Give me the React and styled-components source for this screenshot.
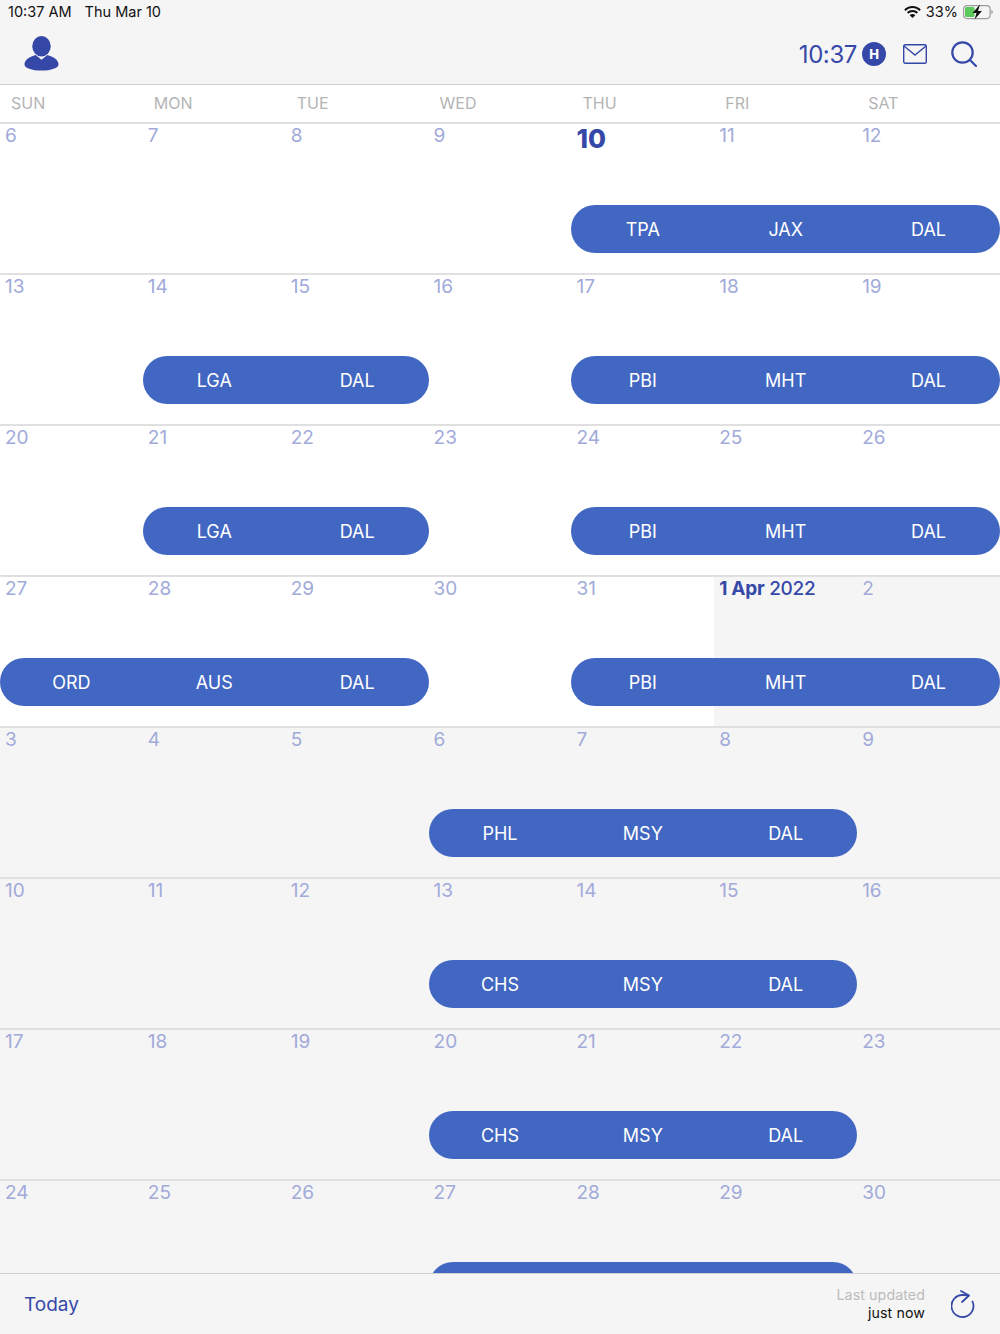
import React from "react";
import styled, { createGlobalStyle } from "styled-components";

const Global = createGlobalStyle`
  html, body { margin: 0; padding: 0; background: #f5f5f5; }
  * { box-sizing: border-box; }
`;

const INK = "#3548a8";

const Page = styled.div`
  width: 1000px;
  height: 1334px;
  display: flex;
  flex-direction: column;
  overflow: hidden;
  background: #f5f5f5;
  font-family: Inter, "Liberation Sans", sans-serif;
`;
const Header = styled.header`
  height: 85px;
  flex: none;
  border-bottom: 1px solid #cfcfcf;
  display: flex;
  flex-direction: column;
`;
const StatusBar = styled.div`
  height: 23px;
  padding: 0 7px 0 8px;
  display: flex;
  align-items: center;
  justify-content: space-between;
  font-size: 14.5px;
  color: #111;
`;
const StatusGroup = styled.div`
  display: flex;
  align-items: center;
  gap: ${(p) => p.$gap}px;
`;
const Toolbar = styled.div`
  flex: 1;
  display: flex;
  align-items: center;
  justify-content: space-between;
  padding: 0 23px 0 24px;
`;
const ToolGroup = styled.div`
  display: flex;
  align-items: center;
`;
const Clock = styled.span`
  font-size: 24px;
  letter-spacing: -0.4px;
  color: ${INK};
  margin-right: 5px;
  padding-top: 2px;
`;
const Badge = styled.span`
  width: 24px;
  height: 24px;
  border-radius: 50%;
  background: ${INK};
  color: #fff;
  font-size: 13px;
  font-weight: 800;
  display: flex;
  align-items: center;
  justify-content: center;
  margin-right: 17px;
`;
const WeekHead = styled.div`
  height: 39px;
  flex: none;
  display: grid;
  grid-template-columns: repeat(7, 1fr);
  align-items: center;
  padding-bottom: 1px;
  background: #fff;
  border-bottom: 2px solid #e0e0e0;
`;
const WeekName = styled.span`
  padding-left: 11px;
  font-size: 16px;
  color: #b4b4b4;
`;
const Calendar = styled.main`
  flex: 1;
  min-height: 0;
  overflow: hidden;
`;
const Week = styled.section`
  height: 151px;
  display: grid;
  grid-template-columns: repeat(7, 1fr);
  grid-template-rows: 81px 48px 1fr;
  border-bottom: 2px solid #e0e0e0;
`;
const Day = styled.div`
  grid-row: 1 / -1;
  grid-column: ${(p) => p.$col};
  background: ${(p) => (p.$past ? "#fff" : "#f5f5f5")};
  padding-left: 5px;
  font-size: 19px;
  line-height: 24px;
  color: #a1aad9;
  white-space: nowrap;
`;
const Today = styled.span`
  display: block;
  font-size: 26px;
  font-weight: 800;
  line-height: 30px;
  color: ${INK};
`;
const MonthLabel = styled.span`
  font-weight: 500;
  letter-spacing: -0.3px;
  color: ${INK};
`;
const MonthStrong = styled.b`
  font-weight: 700;
`;
const Pill = styled.div`
  grid-row: 2;
  grid-column: ${(p) => p.$start} / span ${(p) => p.$span};
  z-index: 1;
  display: grid;
  grid-template-columns: repeat(${(p) => p.$span}, 1fr);
  align-items: center;
  border-radius: 24px;
  background: #4267c2;
  color: #fff;
  font-size: 18px;
  text-align: center;
`;
const Footer = styled.footer`
  height: 61px;
  flex: none;
  border-top: 1px solid #cfcfcf;
  display: flex;
  align-items: center;
  justify-content: space-between;
  padding: 0 25px 0 24px;
  background: #f5f5f5;
`;
const TodayLink = styled.span`
  font-size: 19px;
  color: ${INK};
`;
const Updated = styled.div`
  display: flex;
  flex-direction: column;
  align-items: flex-end;
  font-size: 14.2px;
  line-height: 18px;
  letter-spacing: 0.1px;
  margin-right: 26px;
  color: #111;
`;
const UpdatedLabel = styled.span`
  color: #bcbcbc;
`;

const UserIcon = () => (
  <svg width="35" height="35" viewBox="0 0 36 36">
    <ellipse cx="18" cy="10.5" rx="9.5" ry="10.5" fill={INK} />
    <path d="M12 19.5 L18 24.5 L24 19.5 C30 21 35.5 24.5 35.5 29 C35.5 33 28 35.5 18 35.5 C8 35.5 .5 33 .5 29 C.5 24.5 6 21 12 19.5 Z" fill={INK} />
  </svg>
);
const MailIcon = () => (
  <svg width="24" height="20" viewBox="0 0 24 20" fill="none" stroke={INK} strokeWidth="1.4" style={{ marginRight: 24 }}>
    <rect x="0.7" y="0.7" width="22.6" height="18.6" rx="1.5" />
    <path d="M1 2 L12 11 L23 2" />
  </svg>
);
const SearchIcon = () => (
  <svg width="26" height="26" viewBox="0 0 26 26" fill="none" stroke={INK} strokeWidth="2.2" strokeLinecap="round">
    <circle cx="11.5" cy="11.5" r="10.2" />
    <path d="M19 19 L25 25" />
  </svg>
);
const WifiIcon = () => (
  <svg width="17" height="12" viewBox="0 0 17 12" fill="#111">
    <path d="M8.5 0C5.2 0 2.3 1.3.2 3.4L1.6 4.9C3.4 3.1 5.8 2 8.5 2s5.1 1.1 6.9 2.9l1.4-1.5C14.7 1.3 11.8 0 8.5 0z" />
    <path d="M8.5 4C6.3 4 4.4 4.9 3 6.3l1.4 1.5C5.5 6.7 6.9 6 8.5 6s3 .7 4.1 1.8L14 6.3C12.6 4.9 10.7 4 8.5 4z" />
    <path d="M8.5 8C7.4 8 6.4 8.4 5.7 9.2L8.5 12l2.8-2.8C10.6 8.4 9.6 8 8.5 8z" />
  </svg>
);
const BatteryIcon = () => (
  <svg width="30" height="16" viewBox="0 0 30 16">
    <rect x="0.6" y="1.6" width="26.5" height="13" rx="3.5" fill="none" stroke="#9c9c9c" strokeWidth="1.2" />
    <rect x="2" y="3" width="9.5" height="10" rx="1.5" fill="#5ac85a" />
    <path d="M28.3 6v4c.9-.3 1.5-1.100 1.5-2s-.6-1.700-1.500-2z" fill="#9c9c9c" />
    <path d="M17 .5 L9.5 9 H13.5 L11.5 15.5 L19 7 H15 Z" fill="#111" />
  </svg>
);
const RefreshIcon = () => (
  <svg width="24" height="29" viewBox="0 0 24 29" fill="none" stroke={INK} strokeWidth="1.8" strokeLinecap="round" strokeLinejoin="round">
    <path d="M17.5 5.5 C15.5 5 13.5 5 11.5 5 A11 11 0 1 0 21.5 11.5" />
    <path d="M10 1 L18 5.5 L11 12" />
  </svg>
);

const names = ["SUN", "MON", "TUE", "WED", "THU", "FRI", "SAT"];

const weeks = [
  { days: [6, 7, 8, 9, "today", 11, 12], pills: [{ start: 5, span: 3, stops: ["TPA", "JAX", "DAL"] }] },
  { days: [13, 14, 15, 16, 17, 18, 19], pills: [
    { start: 2, span: 2, stops: ["LGA", "DAL"] },
    { start: 5, span: 3, stops: ["PBI", "MHT", "DAL"] },
  ] },
  { days: [20, 21, 22, 23, 24, 25, 26], pills: [
    { start: 2, span: 2, stops: ["LGA", "DAL"] },
    { start: 5, span: 3, stops: ["PBI", "MHT", "DAL"] },
  ] },
  { days: [27, 28, 29, 30, 31, "apr", 2], pastUntil: 5, pills: [
    { start: 1, span: 3, stops: ["ORD", "AUS", "DAL"] },
    { start: 5, span: 3, stops: ["PBI", "MHT", "DAL"] },
  ] },
  { days: [3, 4, 5, 6, 7, 8, 9], pastUntil: 0, pills: [{ start: 4, span: 3, stops: ["PHL", "MSY", "DAL"] }] },
  { days: [10, 11, 12, 13, 14, 15, 16], pastUntil: 0, pills: [{ start: 4, span: 3, stops: ["CHS", "MSY", "DAL"] }] },
  { days: [17, 18, 19, 20, 21, 22, 23], pastUntil: 0, pills: [{ start: 4, span: 3, stops: ["CHS", "MSY", "DAL"] }] },
  { days: [24, 25, 26, 27, 28, 29, 30], pastUntil: 0, pills: [{ start: 4, span: 3, stops: [] }] },
];

const renderDay = (d) => {
  if (d === "today") return <Today>10</Today>;
  if (d === "apr") return <MonthLabel><MonthStrong>1 Apr</MonthStrong> 2022</MonthLabel>;
  return d;
};

export default function App() {
  return (
    <Page>
      <Global />
      <Header>
        <StatusBar>
          <StatusGroup $gap={13}>
            <span>10:37 AM</span>
            <span>Thu Mar 10</span>
          </StatusGroup>
          <StatusGroup $gap={5}>
            <WifiIcon />
            <span>33%</span>
            <BatteryIcon />
          </StatusGroup>
        </StatusBar>
        <Toolbar>
          <UserIcon />
          <ToolGroup>
            <Clock>10:37</Clock>
            <Badge>H</Badge>
            <MailIcon />
            <SearchIcon />
          </ToolGroup>
        </Toolbar>
      </Header>
      <WeekHead>
        {names.map((n) => <WeekName key={n}>{n}</WeekName>)}
      </WeekHead>
      <Calendar>
        {weeks.map((w, i) => {
          const until = w.pastUntil ?? 7;
          return (
            <Week key={i}>
              {w.days.map((d, c) => (
                <Day key={c} $col={c + 1} $past={c < until}>{renderDay(d)}</Day>
              ))}
              {w.pills.map((p) => (
                <Pill key={p.start} $start={p.start} $span={p.span}>
                  {p.stops.map((s) => <span key={s}>{s}</span>)}
                </Pill>
              ))}
            </Week>
          );
        })}
      </Calendar>
      <Footer>
        <TodayLink>Today</TodayLink>
        <ToolGroup>
          <Updated>
            <UpdatedLabel>Last updated</UpdatedLabel>
            <span>just now</span>
          </Updated>
          <RefreshIcon />
        </ToolGroup>
      </Footer>
    </Page>
  );
}
